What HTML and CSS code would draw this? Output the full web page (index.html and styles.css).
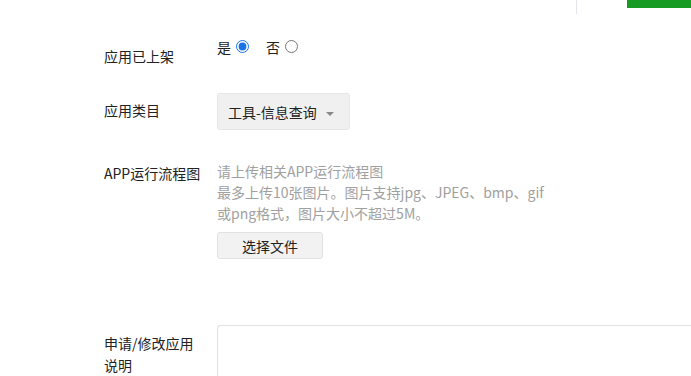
FILE: index.html
```html
<!DOCTYPE html>
<html lang="zh-CN">
<head>
<meta charset="utf-8">
<title>应用信息</title>
<link rel="stylesheet" href="styles.css">
</head>
<body>
<div class="topbar">
  <div class="divider"></div>
  <div class="tab-active"></div>
</div>
<form class="form">
  <div class="row row-listed">
    <div class="label">应用已上架</div>
    <div class="control radios">
      <label class="radio">是<input type="radio" name="listed" checked></label>
      <label class="radio">否<input type="radio" name="listed"></label>
    </div>
  </div>
  <div class="row row-category">
    <div class="label">应用类目</div>
    <div class="control">
      <div class="select"><span>工具-信息查询</span><i class="caret"></i></div>
    </div>
  </div>
  <div class="row row-flow">
    <div class="label">APP运行流程图</div>
    <div class="control">
      <p class="hint">请上传相关APP运行流程图<br>最多上传10张图片。图片支持jpg、JPEG、bmp、gif<br>或png格式，图片大小不超过5M。</p>
      <button type="button" class="btn">选择文件</button>
    </div>
  </div>
  <div class="row row-desc">
    <div class="label">申请/修改应用<br>说明</div>
    <div class="control grow">
      <div class="textarea"></div>
    </div>
  </div>
</form>
</body>
</html>
```

FILE: styles.css
```css
html, body {
  margin: 0;
  padding: 0;
  overflow: hidden;
  background: #fff;
}
body {
  width: 691px;
  height: 376px;
  font-family: "Noto Sans CJK SC", "Noto Sans", sans-serif;
  font-size: 14px;
  color: #222;
}
.topbar {
  display: flex;
  align-items: flex-start;
  height: 14px;
}
.divider {
  margin-left: 576px;
  width: 1px;
  height: 14px;
  background: #e4e4ec;
}
.tab-active {
  margin-left: 50px;
  width: 65px;
  height: 8px;
  background: #179b24;
}
.form {
  padding-left: 104px;
}
.row {
  display: flex;
  align-items: flex-start;
}
.label {
  width: 113px;
  flex: none;
  line-height: 22px;
  color: #222;
}
.control {
  flex: none;
}
.control.grow {
  flex: 1;
  min-width: 0;
}
.row-listed {
  margin-top: 22px;
}
.row-listed .label {
  padding-top: 9px;
}
.radios {
  display: flex;
  line-height: 22px;
}
.radio {
  display: flex;
  align-items: center;
  margin-right: 17px;
}
.radio input {
  width: 13px;
  height: 13px;
  margin: 0 0 2px 5px;
  accent-color: #1a73e8;
}
.row-category {
  margin-top: 26px;
}
.row-category .label {
  padding-top: 6px;
}
.select {
  box-sizing: border-box;
  width: 133px;
  height: 37px;
  display: flex;
  align-items: center;
  padding-left: 10px;
  background: #f0f0f0;
  border: 1px solid #e6e6e6;
  border-radius: 3px;
  color: #222;
}
.caret {
  margin-left: 9px;
  margin-top: 4px;
  width: 0;
  height: 0;
  border-left: 4px solid transparent;
  border-right: 4px solid transparent;
  border-top: 4px solid #888;
}
.row-flow {
  margin-top: 31px;
}
.row-flow .label {
  padding-top: 1px;
}
.hint {
  margin: 0;
  line-height: 21px;
  color: #a0a0a0;
}
.btn {
  display: block;
  box-sizing: border-box;
  margin-top: 8px;
  width: 106px;
  height: 27px;
  padding: 0;
  font: inherit;
  font-size: 14px;
  color: #222;
  background: #f2f2f2;
  border: 1px solid #e2e2e2;
  border-radius: 3px;
}
.row-desc {
  margin-top: 66px;
}
.row-desc .label {
  padding-top: 7px;
}
.textarea {
  box-sizing: border-box;
  height: 51px;
  border: 1px solid #e2e2e2;
  border-right: none;
  border-bottom: none;
  border-top-left-radius: 3px;
  background: #fff;
}
```
